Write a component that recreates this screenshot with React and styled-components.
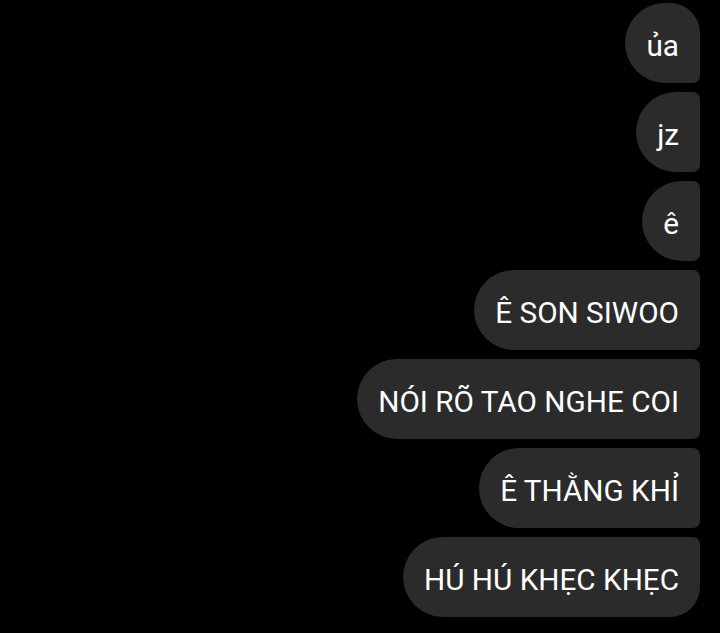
import styled, { createGlobalStyle } from 'styled-components'

const Global = createGlobalStyle`
    html, body {
        margin: 0;
        padding: 0;
        background: #000;
    }
    body {
        font-family: Roboto, "Noto Sans", sans-serif;
    }
`

const Thread = styled.div`
    width: 720px;
    height: 633px;
    box-sizing: border-box;
    padding: 3px 20px 0 0;
    display: flex;
    flex-direction: column;
    align-items: flex-end;
    gap: 9px;
    background: #000;
    overflow: hidden;
`

const Bubble = styled.div`
    height: 80px;
    box-sizing: border-box;
    padding: 5px 21px 0;
    display: flex;
    align-items: center;
    background: #2b2b2b;
    color: #fff;
    font-size: 29.7px;
    white-space: nowrap;
    border-radius: 40px ${p => (p.$first ? '30px' : '7px')} ${p => (p.$last ? '30px' : '7px')} 40px;
`

const messages = [
    'ủa',
    'jz',
    'ê',
    'Ê SON SIWOO',
    'NÓI RÕ TAO NGHE COI',
    'Ê THẰNG KHỈ',
    'HÚ HÚ KHẸC KHẸC',
]

export default function App() {
    return (
        <>
            <Global />
            <Thread>
                {messages.map((m, i) => (
                    <Bubble key={i} $first={i === 0} $last={i === messages.length - 1}>
                        {m}
                    </Bubble>
                ))}
            </Thread>
        </>
    )
}
